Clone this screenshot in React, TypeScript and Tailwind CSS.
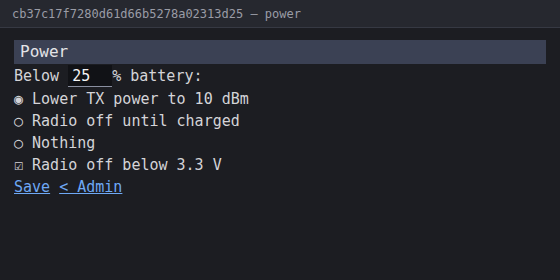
export default function App() {
  return (
    <div className="w-[560px] h-[280px] bg-[#1c1d22] text-[#d4d4d8] font-['DejaVu_Sans_Mono',monospace] overflow-hidden">
      <div className="h-[28px] bg-[#26282f] border-b border-[#363943] px-3 flex items-center text-[12px] text-[#9a9ca6]">
        cb37c17f7280d61d66b5278a02313d25 — power
      </div>
      <div className="px-[14px] pt-[12px] text-[15px] leading-[22px]">
        <div className="h-[24px] bg-[#3b4154] px-[6px] flex items-center text-[16px] text-[#e4e4e7]">Power</div>
        <div className="flex items-center h-[24px]">
          <span className="whitespace-pre">Below </span>
          <input
            className="w-[44px] h-[22px] bg-[#111216] border-b border-[#8a8fa0] px-[4px] text-[#f4f4f5] outline-none"
            defaultValue="25"
          />
          <span className="whitespace-pre">% battery:</span>
        </div>
        <div className="whitespace-pre">◉ Lower TX power to 10 dBm</div>
        <div className="whitespace-pre">○ Radio off until charged</div>
        <div className="whitespace-pre">○ Nothing</div>
        <div className="whitespace-pre">☑ Radio off below 3.3 V</div>
        <div className="whitespace-pre text-[#6ea8f5]">
          <a className="underline" href="#">Save</a> <a className="underline" href="#">&lt; Admin</a>
        </div>
      </div>
    </div>
  );
}
